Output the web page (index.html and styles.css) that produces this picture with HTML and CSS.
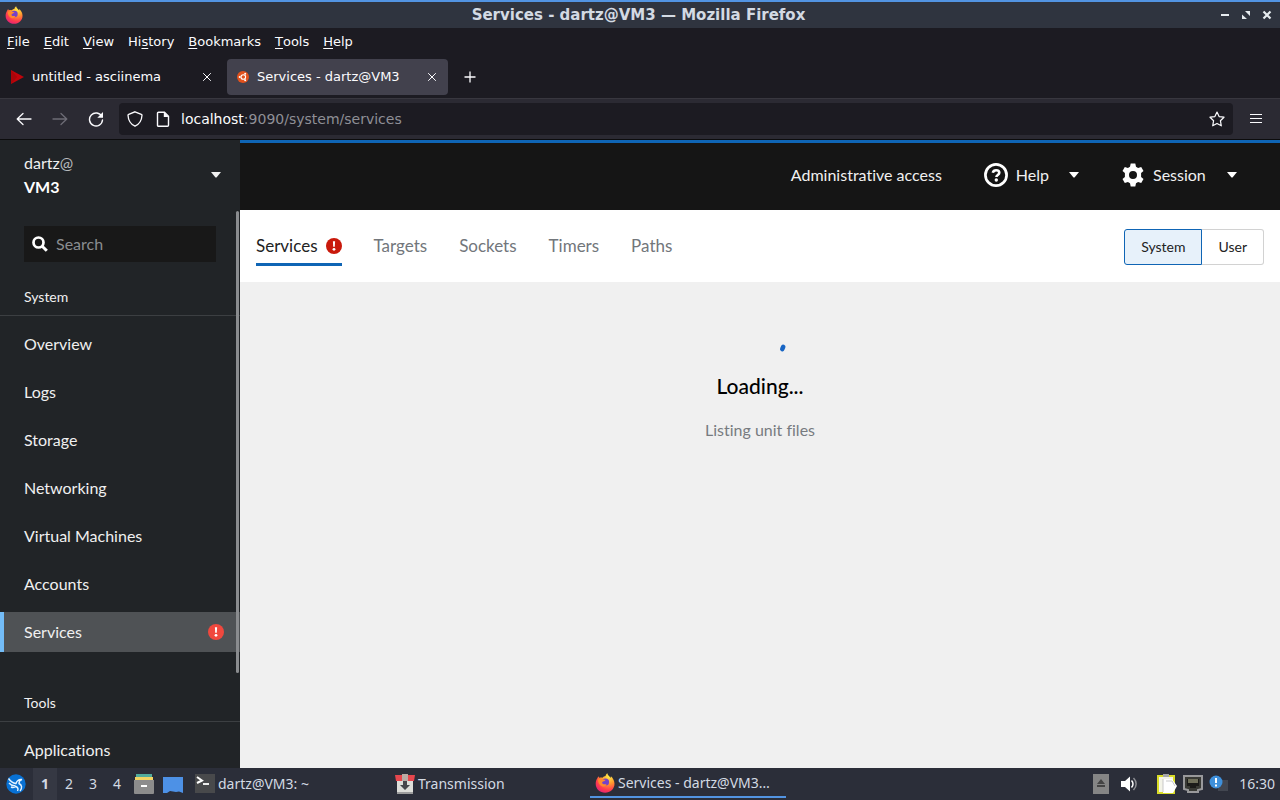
FILE: index.html
```html
<!DOCTYPE html>
<html lang="en">
<head>
<meta charset="utf-8">
<title>Services - dartz@VM3</title>
<link rel="stylesheet" href="styles.css">
</head>
<body>
<svg class="defs" aria-hidden="true">
  <defs>
    <radialGradient id="flame" cx="70%" cy="15%" r="95%"><stop offset="0" stop-color="#fff04a"/><stop offset=".4" stop-color="#ff9a2e"/><stop offset=".75" stop-color="#ff3b4e"/><stop offset="1" stop-color="#e0207c"/></radialGradient>
    <symbol id="fox" viewBox="0 0 20 20">
      <path fill="url(#flame)" d="M2.200 5.500c.3-.9.900-1.700 1.500-2.200 0 .6.200 1.200.5 1.500 1.100-.4 2.200-.5 3.300-.1C8.300 3.600 9.600 3.100 10.600 3c0-1 .8-2.100 1.800-2.700.3 2.300 2.100 3.100 3.300 4.700l.2-1.800c2.200 1.900 3.600 4.700 3.600 7.500 0 5.200-4.200 9-9.400 9S.7 15.900.7 10.700c0-2 .6-3.800 1.500-5.200z"/>
      <circle cx="10.500" cy="9" r="3.600" fill="#7542c8"/>
      <path fill="#ff8a2c" d="M3 6.500c1.600-1 3.200-1 4.800-.2.800.4 1.700.5 2.700.4-.4 1-1.400 1.500-2.400 1.800-.6.200-1.100.8-.9 1.700 1.200 1.700 3 .5 4.300 1.200-.9 1.900-2.700 2.500-4.500 1.900C4.600 12.500 3 9.500 3 6.500z"/>
    </symbol>
    <symbol id="close" viewBox="0 0 10 10"><path d="M1.200 1.200l7.600 7.600m0-7.600l-7.600 7.600" stroke="currentColor" stroke-width="1"/></symbol>
    <symbol id="caret" viewBox="0 0 10 6"><path d="M0 0h10L5.500 5.500h-1z" fill="currentColor"/></symbol>
    <symbol id="alert" viewBox="0 0 16 16"><circle cx="8" cy="8" r="8" fill="currentColor"/><path d="M6.900 3.300h2.200l-.3 5.500H7.200z" fill="#fff"/><circle cx="8" cy="11.300" r="1.400" fill="#fff"/></symbol>
  </defs>
</svg>

<header class="titlebar">
  <svg class="app-icon"><use href="#fox"/></svg>
  <span class="window-title">Services - dartz@VM3 — Mozilla Firefox</span>
  <div class="window-buttons">
    <button aria-label="Minimize"><svg viewBox="0 0 10 10"><path d="M1 5h8" stroke="#e6ebef" stroke-width="2"/></svg></button>
    <button aria-label="Maximize"><svg viewBox="0 0 10 10"><path d="M4 1h5v5zM1 4.500L6 9H1z" fill="#e6ebef"/></svg></button>
    <button aria-label="Close window"><svg viewBox="0 0 10 10"><path d="M1.500 1.500l7 7m0-7l-7 7" stroke="#e6ebef" stroke-width="2.200"/></svg></button>
  </div>
</header>

<nav class="menubar">
  <button><u>F</u>ile</button><button><u>E</u>dit</button><button><u>V</u>iew</button><button>Hi<u>s</u>tory</button><button><u>B</u>ookmarks</button><button><u>T</u>ools</button><button><u>H</u>elp</button>
</nav>

<div class="tabstrip">
  <div class="tab">
    <svg class="favicon" viewBox="0 0 14 14"><path d="M1 0l13 7-13 7z" fill="#c1040b"/><path d="M1 0l6 7-6 7z" fill="#94050a" opacity=".5"/></svg>
    <span class="tab-label">untitled - asciinema</span>
    <button class="tab-close" aria-label="Close tab"><svg><use href="#close"/></svg></button>
  </div>
  <div class="tab tab-active">
    <svg class="favicon favicon-small" viewBox="0 0 12 12"><circle cx="6" cy="6" r="6" fill="#e2521d"/><circle cx="6.300" cy="6" r="2.300" fill="none" stroke="#fff" stroke-width="1.100"/><circle cx="2.700" cy="6" r="1" fill="#fff"/><circle cx="8.200" cy="2.800" r="1" fill="#fff"/><circle cx="8.200" cy="9.200" r="1" fill="#fff"/></svg>
    <span class="tab-label">Services - dartz@VM3</span>
    <button class="tab-close" aria-label="Close tab"><svg><use href="#close"/></svg></button>
  </div>
  <button class="new-tab" aria-label="New tab"><svg viewBox="0 0 12 12"><path d="M6 .5v11M.5 6h11" stroke="currentColor" stroke-width="1.300"/></svg></button>
</div>

<div class="toolbar">
  <button aria-label="Back"><svg viewBox="0 0 16 16"><path d="M15 8H1.500M7 2.500L1.200 8 7 13.500" fill="none" stroke="#fbfbfe" stroke-width="1.300" stroke-linecap="round" stroke-linejoin="round"/></svg></button>
  <button aria-label="Forward" disabled><svg viewBox="0 0 16 16"><path d="M1 8h13.500M9 2.500l5.800 5.500L9 13.500" fill="none" stroke="#6d6c76" stroke-width="1.300" stroke-linecap="round" stroke-linejoin="round"/></svg></button>
  <button aria-label="Reload"><svg viewBox="0 0 16 16"><path d="M13.800 5.500A6.500 6.500 0 1 0 14.500 9" fill="none" stroke="#fbfbfe" stroke-width="1.400" stroke-linecap="round"/><path d="M15 1v5.800H9.300z" fill="#fbfbfe"/></svg></button>
  <div class="urlbar">
    <svg viewBox="0 0 16 16"><path d="M8 .8l6.300 2.500c.5.200.7.500.7 1-.3 5.300-2.500 8.900-7 10.900-4.500-2-6.700-5.600-7-10.900 0-.5.200-.8.700-1z" fill="none" stroke="#fbfbfe" stroke-width="1.300"/></svg>
    <svg viewBox="0 0 16 16"><path d="M3.500 1.200h6l4 4v9a1 1 0 0 1-1 1h-9a1 1 0 0 1-1-1v-12a1 1 0 0 1 1-1z" fill="none" stroke="#fbfbfe" stroke-width="1.400"/><path d="M8.800 1l4.900 5H8.800z" fill="#fbfbfe"/></svg>
    <div class="url" role="textbox" aria-label="Address" contenteditable="true"><span>localhost</span>:9090/system/services</div>
    <button class="bookmark" aria-label="Bookmark"><svg viewBox="0 0 16 16"><path d="M8 1l2.100 4.600 4.900.6-3.600 3.500.9 5.100L8 12.400l-4.300 2.400.9-5.100L1 6.200l4.900-.6z" fill="none" stroke="#fbfbfe" stroke-width="1.200" stroke-linejoin="round"/></svg></button>
  </div>
  <button aria-label="Menu"><svg viewBox="0 0 16 16"><path d="M2 3.500h12M2 7.500h12M2 11.500h12" stroke="#fbfbfe" stroke-width="1.200"/></svg></button>
</div>

<div class="page">
  <aside class="sidebar">
    <button class="host">
      <span>dartz<i>@</i><b>VM3</b></span>
      <svg class="caret"><use href="#caret"/></svg>
    </button>
    <div class="sidebar-scroll">
      <label class="search">
        <svg viewBox="0 0 16 16"><circle cx="6.500" cy="6.500" r="5" fill="none" stroke="#fff" stroke-width="2.700"/><path d="M10.200 10.200l4.600 4.600" stroke="#fff" stroke-width="3"/></svg>
        <input type="search" placeholder="Search" aria-label="Search">
      </label>
      <h2>System</h2>
      <nav class="side-nav">
        <a href="#">Overview</a>
        <a href="#">Logs</a>
        <a href="#">Storage</a>
        <a href="#">Networking</a>
        <a href="#">Virtual Machines</a>
        <a href="#">Accounts</a>
        <a href="#" class="current">Services<svg class="alert"><use href="#alert"/></svg></a>
      </nav>
      <h2 class="tools">Tools</h2>
      <nav class="side-nav"><a href="#">Applications</a></nav>
    </div>
    <div class="scroll-thumb"></div>
  </aside>
  <div class="content">
    <header class="masthead">
      <button class="access">Administrative access</button>
      <button class="menu-toggle"><svg class="large-icon" viewBox="0 0 24 24"><circle cx="12" cy="12" r="10.600" fill="none" stroke="#fff" stroke-width="2.700"/><path d="M8.800 9.700c.4-1.600 1.600-2.500 3.300-2.500 1.900 0 3.200 1 3.200 2.600 0 2.200-2.900 2.200-2.900 4.100" fill="none" stroke="#fff" stroke-width="2.600"/><circle cx="12.300" cy="17" r="1.700" fill="#fff"/></svg><span>Help</span><svg class="caret"><use href="#caret"/></svg></button>
      <button class="menu-toggle session"><svg class="large-icon" viewBox="0 0 24 24"><path fill="#fff" fill-rule="evenodd" d="M9.700.5h4.600l.7 3.200 2.100 1.200 3.100-1 2.300 4-2.400 2.200v3.800l2.400 2.200-2.300 4-3.100-1-2.100 1.200-.7 3.200H9.700L9 20.300l-2.100-1.200-3.100 1-2.300-4 2.400-2.200v-3.800L1.500 7.900l2.300-4 3.100 1L9 3.700zM12 8a4 4 0 1 0 0 8 4 4 0 0 0 0-8z"/></svg><span>Session</span><svg class="caret"><use href="#caret"/></svg></button>
    </header>
    <div class="subnav">
      <nav class="unit-tabs">
        <a href="#" class="selected">Services<svg class="alert"><use href="#alert"/></svg></a>
        <a href="#">Targets</a>
        <a href="#">Sockets</a>
        <a href="#">Timers</a>
        <a href="#">Paths</a>
      </nav>
      <div class="toggle"><button class="on" aria-pressed="true">System</button><button aria-pressed="false">User</button></div>
    </div>
    <main class="loading">
      <svg class="spinner" viewBox="0 0 54 32"><path d="M49.300 8l.9-2.200" stroke="#1765c4" stroke-width="4.600" stroke-linecap="round"/></svg>
      <h1>Loading...</h1>
      <p>Listing unit files</p>
    </main>
  </div>
</div>

<footer class="taskbar">
  <button class="start" aria-label="Applications menu"><svg viewBox="0 0 20 20"><circle cx="10" cy="10" r="9.700" fill="#0871d4"/><path d="M2.500 4.500c2 3 4.500 4.500 7.500 5C11 6.500 13 5 16 5.500c-2.500.5-3 2-3 4 3 1.500 3.500 4.500 1 7.500M3 9c2 2.300 4 3 6.500 2.500M5 13c2 1 3.500.5 5-.5 2 1 2.500 2.500 1.500 4.500" fill="none" stroke="#e4f3ff" stroke-width="1.400"/></svg></button>
  <div class="desktops"><button class="active">1</button><button>2</button><button>3</button><button>4</button></div>
  <button class="launcher" aria-label="Files"><svg viewBox="0 0 20 20"><path d="M2 0h16v5H2z" fill="#52ac9c"/><path d="M1 3h18v4H1z" fill="#f3d463"/><path d="M0 6h20v13a1 1 0 0 1-1 1H1a1 1 0 0 1-1-1z" fill="#8c8c8c"/><path d="M7 12h6" stroke="#fff" stroke-width="2"/></svg></button>
  <button class="launcher" aria-label="Desktop"><svg viewBox="0 0 20 20"><path d="M0 3h20v16l-4-1.500-3 .5-6-1-3 2H0z" fill="#4d91e6"/></svg></button>
  <div class="tasks">
    <button class="task"><svg viewBox="0 0 20 20"><path d="M0 0h20v19H0z" fill="#48494b"/><path d="M2 3l5 3.500L2 9" fill="none" stroke="#fff" stroke-width="2"/><path d="M8 10h6" stroke="#fff" stroke-width="1.800"/></svg><span>dartz@VM3: ~</span></button>
    <button class="task"><svg viewBox="0 0 20 20"><path d="M2 1h16v18H2z" fill="#deded9"/><path d="M0 1h7v6H1zM13 1h7l-1 6h-6z" fill="#e6474e"/><path d="M7 0h6v7H7z" fill="#b9aaa4"/><path d="M8 7h4v4h3l-5 5-5-5h3z" fill="#46464b"/><path d="M2 18h16v2H2z" fill="#9c9c9c"/></svg><span>Transmission</span></button>
    <button class="task task-active"><svg><use href="#fox"/></svg><span>Services - dartz@VM3…</span></button>
  </div>
  <div class="tray">
    <svg class="eject" viewBox="0 0 16 20"><path d="M0 0h16v20H0z" fill="#858585"/><path d="M8 5l4 5H4zM4 11h8v2H4z" fill="#444"/></svg>
    <svg class="volume" viewBox="0 0 16 16"><path d="M0 5h4l5-4.500v15L4 11H0z" fill="#fff"/><path d="M10.500 4.500c2 2 2 5 0 7" fill="none" stroke="#fff" stroke-width="1.500"/><path d="M12.500 2c3.500 3.500 3.500 8.500 0 12" fill="none" stroke="#8c8d92" stroke-width="1.500"/></svg>
    <svg class="clipboard" viewBox="0 0 20 20"><path d="M1 2h16v17H1z" fill="#f4f4e8" stroke="#d9dc27" stroke-width="2"/><path d="M6 0h6v3H6z" fill="#a7a7a7"/><path d="M6 5h9l5 7-4 7H6z" fill="#fff"/><path d="M6 5v13M9 7h6l3 5" fill="none" stroke="#c9c9c9"/></svg>
    <svg class="network" viewBox="0 0 20 20"><path d="M1 2h18v13l-4 1v2H5v-2l-4-1z" fill="#393a35" stroke="#99999b" stroke-width="2"/><path d="M4 5h12v7h-3v2H7v-2H4z" fill="#1c1c1a"/><path d="M6 5v4m2-4v4m2-4v4m2-4v4m2-4v4" stroke="#c4c49c"/></svg>
    <svg class="notice" viewBox="0 0 20 20"><path d="M9 6h10v11H9z" fill="#424650"/><circle cx="7" cy="8" r="6.500" fill="#3f90db"/><path d="M7 4v5m0 1.500v2" stroke="#fff" stroke-width="2"/></svg>
    <time>16:30</time>
  </div>
</footer>
</body>
</html>
```
FILE: styles.css
```css
* { box-sizing: border-box; }

body {
  margin: 0;
  height: 100vh;
  display: flex;
  flex-direction: column;
  overflow: hidden;
  background: #1c1b22;
  color: #fbfbfe;
  font: 13px/20px "DejaVu Sans", sans-serif;
}

button {
  display: flex;
  align-items: center;
  justify-content: center;
  margin: 0;
  padding: 0;
  border: 0;
  background: none;
  color: inherit;
  font: inherit;
  white-space: nowrap;
}

a { color: inherit; text-decoration: none; }
svg { display: block; flex: none; }
.defs { position: absolute; width: 0; height: 0; }
.caret { width: 10px; height: 6px; }
.alert { width: 16px; height: 16px; }

/* Window frame */
.titlebar {
  flex: none;
  display: grid;
  grid-template-columns: 1fr auto 1fr;
  align-items: center;
  height: 28px;
  padding: 0 8px 0 5px;
  border-top: 2px solid #5294e2;
  background: #2f343f;
}
.app-icon { width: 18px; height: 18px; }
.window-title { color: #d3dae3; font-size: 15px; font-weight: bold; }
.window-buttons { display: flex; justify-content: flex-end; gap: 11px; }
.window-buttons svg { width: 10px; height: 10px; }

.menubar {
  flex: none;
  display: flex;
  gap: 14px;
  height: 28px;
  padding: 0 7px;
}
.menubar u { text-underline-offset: 2px; }

/* Tabs */
.tabstrip {
  flex: none;
  display: flex;
  align-items: center;
  height: 42px;
  padding: 0 2px;
}
.tab {
  display: flex;
  align-items: center;
  width: 225px;
  height: 36px;
  padding: 0 15px 0 8px;
  border-radius: 4px;
}
.tab-active { width: 221px; padding: 0 11px 0 10px; background: #42414d; }
.favicon { width: 14px; height: 14px; }
.favicon-small { width: 12px; height: 12px; }
.tab-label { flex: 1; margin-left: 8px; }
.tab-close svg { width: 10px; height: 10px; }
.new-tab { width: 44px; height: 36px; }
.new-tab svg { width: 12px; height: 12px; }

/* Navigation toolbar */
.toolbar {
  flex: none;
  display: flex;
  align-items: center;
  height: 42px;
  padding: 0 6px;
  border-top: 1px solid #38373f;
  border-bottom: 1px solid #0c0c0d;
  background: #2b2a33;
}
.toolbar button { width: 36px; height: 32px; }
.toolbar svg { width: 16px; height: 16px; }
.urlbar {
  flex: 1;
  display: flex;
  align-items: center;
  gap: 12px;
  height: 32px;
  margin: 0 5px;
  padding-left: 8px;
  border-radius: 4px;
  background: #1c1b22;
}
.url { flex: 1; margin-left: -2px; color: #8f8f96; font-size: 14px; outline: 0; }
.url span { color: #fbfbfe; }
.toolbar .bookmark { width: 32px; }

/* Console page */
.page {
  flex: 1;
  display: flex;
  min-height: 0;
  font: 16px/24px Lato, sans-serif;
  font-variant-ligatures: none;
}
.sidebar {
  flex: none;
  position: relative;
  display: flex;
  flex-direction: column;
  width: 240px;
  background: #212427;
  color: #f0f0f0;
}
.host {
  flex: none;
  justify-content: space-between;
  height: 70px;
  padding: 0 19px 0 24px;
  text-align: left;
}
.host i { color: #b8bbbe; font-style: normal; }
.host b { display: block; color: #fff; }
.sidebar-scroll {
  flex: 1;
  min-height: 0;
  overflow: auto;
  padding-top: 16px;
  scrollbar-width: none;
}
.scroll-thumb {
  position: absolute;
  top: 71px;
  right: 1px;
  width: 3px;
  height: 462px;
  border-radius: 2px;
  background: #8a8c8f;
}
.search {
  display: flex;
  align-items: center;
  gap: 8px;
  height: 36px;
  margin: 0 24px;
  padding: 0 8px;
  background: #181818;
}
.search svg { width: 16px; height: 16px; }
.search input {
  flex: 1;
  min-width: 0;
  padding: 0;
  border: 0;
  outline: 0;
  background: none;
  color: #fff;
  font: inherit;
}
.search input::placeholder { color: #8a8d90; opacity: 1; }
.sidebar h2 {
  margin: 24px 0 8px;
  padding: 0 24px 8px;
  border-bottom: 1px solid #3c3f42;
  font-size: 14px;
  font-weight: 400;
  line-height: 21px;
}
.sidebar .tools { margin-top: 40px; }
.side-nav { display: grid; gap: 8px; }
.side-nav a {
  display: flex;
  align-items: center;
  justify-content: space-between;
  height: 40px;
  padding: 0 16px 0 24px;
}
.side-nav .current {
  padding-left: 20px;
  border-left: 4px solid #73bcf7;
  background: #4f5255;
}
.current .alert { color: #f0483e; }

.content {
  flex: 1;
  display: flex;
  flex-direction: column;
  min-width: 0;
}
.masthead {
  flex: none;
  display: flex;
  align-items: center;
  justify-content: flex-end;
  gap: 42px;
  height: 70px;
  padding: 0 43px 3px 16px;
  border-top: 3px solid #0f65b5;
  background: #151515;
  color: #f0f0f0;
}
.menu-toggle span { margin: 0 20px 0 8px; }
.menu-toggle .caret { margin-left: auto; color: #fff; }
.session { min-width: 116px; }
.large-icon { width: 24px; height: 24px; }
.subnav {
  flex: none;
  display: flex;
  align-items: center;
  justify-content: space-between;
  height: 72px;
  padding: 2px 16px 0;
  background: #fff;
}
.unit-tabs { display: flex; gap: 32px; color: #72767b; font-size: 17px; }
.unit-tabs a { display: flex; align-items: center; padding: 6px 0 5px; border-bottom: 3px solid transparent; }
.unit-tabs .selected { gap: 8px; border-color: #0f65b5; color: #222; }
.selected .alert { color: #c9190b; }
.toggle { display: flex; color: #222; font-size: 14px; }
.toggle button { height: 36px; padding: 0 16px; border: 1px solid #d2d2d2; border-left: 0; border-radius: 0 3px 3px 0; }
.toggle .on { border: 1px solid #0f65b5; border-radius: 3px 0 0 3px; background: #e7f1fa; }

.loading {
  flex: 1;
  display: flex;
  flex-direction: column;
  align-items: center;
  padding-top: 59px;
  background: #f0f0f0;
  color: #000;
  text-align: center;
}
.spinner { width: 54px; height: 32px; }
.loading h1 { margin: 0; font-size: 21px; font-weight: 500; line-height: 26px; }
.loading p { margin: 19px 0 0; color: #777b80; }

/* Desktop panel */
.taskbar {
  flex: none;
  display: flex;
  align-items: center;
  height: 32px;
  padding: 0 5px 0 6px;
  background: #2b2e39;
  color: #d3dae3;
  font: 14px/20px "Noto Sans", sans-serif;
}
.taskbar svg { width: 20px; height: 20px; }
.desktops { display: flex; margin-left: 7px; }
.desktops button { width: 24px; height: 32px; }
.desktops .active { background: #353843; font-weight: bold; }
.launcher { width: 29px; }
.tasks { flex: 1; display: flex; gap: 4px; min-width: 0; margin-left: 3px; }
.task {
  flex: 0 1 196px;
  justify-content: flex-start;
  gap: 3px;
  min-width: 0;
  height: 28px;
  padding-left: 5px;
}
.task-active { border-bottom: 2px solid #5294e2; }
.tray { display: flex; align-items: center; gap: 6px; }
.tray .eject { width: 16px; }
.tray .volume { width: 16px; height: 16px; margin: 0 14px 0 6px; }
.tray time { margin-left: 4px; }
```
